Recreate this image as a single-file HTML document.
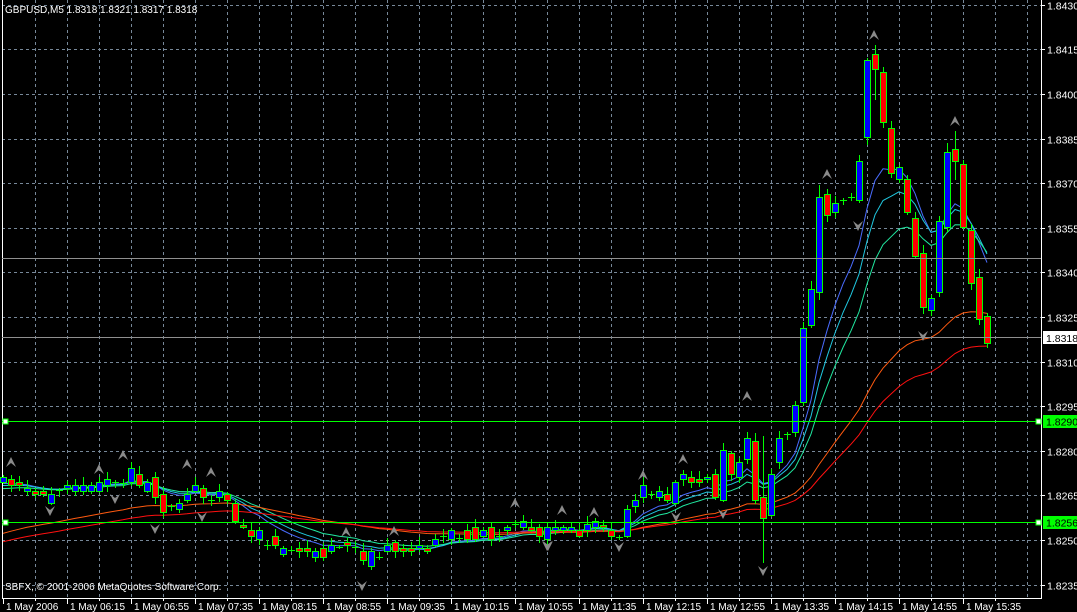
<!DOCTYPE html><html><head><meta charset="utf-8"><style>
html,body{margin:0;padding:0;background:#000;}
svg{display:block;font-family:"Liberation Sans",sans-serif;}
</style></head><body>
<svg id="s" width="1077" height="612" viewBox="0 0 1077 612" xmlns="http://www.w3.org/2000/svg">
<rect width="1077" height="612" fill="#000"/>
<g id="grid"></g>
<g id="ma"></g>
<g id="cs"></g>
<g id="fr"></g>
<g id="ov"></g>
<text x="5" y="13" fill="#fff" font-size="10">GBPUSD,M5  1.8318 1.8321 1.8317 1.8318</text>
<text x="5" y="590" fill="#fff" font-size="10">SBFX, © 2001-2006 MetaQuotes Software Corp.</text>
</svg>
<script>
var NS="http://www.w3.org/2000/svg";
function el(p,t,a,txt){var e=document.createElementNS(NS,t);for(var k in a)e.setAttribute(k,a[k]);if(txt!=null)e.textContent=txt;document.getElementById(p).appendChild(e);return e;}
function py(p){return 317+(1.8325-p)/0.0015*44.6;}
for(var x=35;x<1040;x+=32)el("grid","line",{x1:x+.5,y1:0,x2:x+.5,y2:598,stroke:"#778899","stroke-dasharray":"3,3"});
for(var i=0;i<14;i++){var p=1.8430-i*0.0015,y=Math.round(py(p))+.5;
el("grid","line",{x1:2,y1:y,x2:1041,y2:y,stroke:"#778899","stroke-dasharray":"3,3"});
el("grid","line",{x1:1041,y1:y,x2:1045,y2:y,stroke:"#fff"});
if(Math.abs(y-522)>8&&Math.abs(y-421)>8)el("grid","text",{x:1047,y:y+4,fill:"#fff","font-size":"10.5"},p.toFixed(4));}
el("grid","line",{x1:2.5,y1:0,x2:2.5,y2:599,stroke:"#fff"});
el("grid","line",{x1:1041.5,y1:0,x2:1041.5,y2:599,stroke:"#fff"});
el("grid","line",{x1:2,y1:598.5,x2:1042,y2:598.5,stroke:"#fff"});
var tl=["1 May 2006","1 May 06:15","1 May 06:55","1 May 07:35","1 May 08:15","1 May 08:55","1 May 09:35","1 May 10:15","1 May 10:55","1 May 11:35","1 May 12:15","1 May 12:55","1 May 13:35","1 May 14:15","1 May 14:55","1 May 15:35"];
for(var k=0;k<tl.length;k++){var tx=3+64*k;el("grid","line",{x1:tx+.5,y1:598,x2:tx+.5,y2:604,stroke:"#fff"});el("grid","text",{x:tx+3,y:610,fill:"#fff","font-size":"10"},tl[k]);}
for(var x=35;x<1040;x+=64)el("grid","line",{x1:x+.5,y1:598,x2:x+.5,y2:601,stroke:"#fff"});
var C=[[3,477,482,'b'],[11,479,485,'r'],[19,482,485,'r'],[27,488,491,'b'],[35,491,494,'r'],[43,491,494,'r'],[51,494,503,'b'],[59,490,490,'d'],[67,485,488,'b'],[75,485,491,'b'],[83,485,491,'b'],[91,485,491,'b'],[99,482,491,'b'],[107,479,485,'b'],[115,482,482,'d'],[123,483,483,'d'],[131,468,482,'b'],[139,474,485,'r'],[147,482,491,'b'],[155,477,497,'r'],[163,494,512,'r'],[171,506,506,'d'],[179,503,509,'b'],[187,494,500,'b'],[195,485,491,'b'],[203,488,497,'r'],[211,500,500,'d'],[219,491,497,'b'],[227,494,500,'r'],[235,503,521,'r'],[243,525,527,'r'],[251,530,536,'r'],[259,530,539,'b'],[267,545,545,'d'],[275,536,545,'r'],[283,548,554,'b'],[291,550,550,'d'],[299,548,551,'r'],[307,548,551,'r'],[315,551,557,'b'],[323,548,557,'r'],[331,545,551,'b'],[339,547,547,'d'],[347,542,545,'r'],[355,547,547,'d'],[363,551,560,'r'],[371,551,566,'b'],[379,557,557,'d'],[387,545,551,'b'],[395,542,551,'r'],[403,548,551,'r'],[411,548,551,'r'],[419,545,548,'b'],[427,548,551,'r'],[435,539,545,'b'],[443,536,536,'d'],[451,530,539,'b'],[459,538,538,'d'],[467,530,539,'r'],[475,527,539,'r'],[483,530,536,'b'],[491,527,539,'r'],[499,536,536,'d'],[507,527,530,'b'],[515,524,524,'d'],[523,521,527,'b'],[531,527,530,'r'],[539,527,536,'r'],[547,527,539,'b'],[555,527,530,'b'],[563,527,530,'b'],[571,527,530,'b'],[579,530,536,'r'],[587,524,530,'b'],[595,521,527,'b'],[603,525,527,'r'],[611,530,536,'r'],[619,537,537,'d'],[627,509,536,'b'],[635,500,506,'b'],[643,485,497,'b'],[651,494,494,'d'],[659,491,497,'b'],[667,494,500,'r'],[675,482,503,'b'],[683,474,479,'b'],[691,477,482,'r'],[699,479,482,'r'],[707,477,479,'b'],[715,474,497,'r'],[723,450,500,'b'],[731,453,474,'r'],[739,462,477,'b'],[747,438,459,'b'],[755,441,500,'r'],[763,497,518,'r'],[771,474,515,'b'],[779,438,462,'b'],[787,434,434,'d'],[795,405,432,'b'],[803,328,402,'b'],[811,289,325,'b'],[819,197,292,'b'],[827,194,215,'r'],[835,203,212,'b'],[843,200,200,'d'],[851,197,197,'d'],[859,161,200,'b'],[867,60,137,'b'],[875,54,69,'r'],[883,72,122,'r'],[891,128,173,'r'],[899,167,179,'b'],[907,179,212,'r'],[915,218,256,'r'],[923,253,307,'r'],[931,298,310,'b'],[939,221,292,'b'],[947,152,227,'b'],[955,149,161,'r'],[963,164,227,'r'],[971,230,283,'r'],[979,277,319,'r'],[987,316,343,'r']];
var W={763:[436,563],875:[45,100],867:[58,145],819:[185,300],955:[131,180],947:[143,232]};
var cl=C.map(function(c){return c[3]=='b'?c[1]:c[3]=='r'?c[2]:c[1];});
function ema(n,init){var a=2/(n+1),v=init,o=[];for(var i=0;i<cl.length;i++){v=v+a*(cl[i]-v);o.push(v);}return o;}
var mas=[[ema(9,485),"#4a6cff"],[ema(12,487),"#20c8e0"],[ema(17,490),"#20e8a0"],[ema(44,536),"#ff5a10"],[ema(60,544),"#ff1010"]];
mas.forEach(function(m){var d="";for(var i=0;i<C.length;i++)d+=(i?"L":"M")+C[i][0]+" "+m[0][i].toFixed(1);el("ma","path",{d:d,fill:"none",stroke:m[1],"stroke-width":"1"});});
for(var i=0;i<C.length;i++){var c=C[i],x=c[0],t=c[1],b=c[2];
var h=(i*37)%7+2,l=(i*53)%6+2;var wt=t-h,wb=b+l;if(W[x]){wt=W[x][0];wb=W[x][1];}
el("cs","line",{x1:x+.5,y1:wt,x2:x+.5,y2:wb,stroke:"#00ff00"});
if(c[3]=='d'){el("cs","line",{x1:x-3,y1:t+.5,x2:x+4,y2:t+.5,stroke:"#00ff00"});}
else el("cs","rect",{x:x-2.5,y:t+.5,width:6,height:Math.max(2,b-t),fill:c[3]=='b'?"#0000ff":"#ff0000",stroke:"#00ff00"});}
function up(x,y){el("fr","path",{d:"M"+(x-5)+" "+(y+5)+"L"+x+" "+(y-5)+"L"+(x+5)+" "+(y+5)+"L"+x+" "+(y+1)+"Z",fill:"#8a8a8a"});}
function dn(x,y){el("fr","path",{d:"M"+(x-5)+" "+(y-5)+"L"+x+" "+(y+5)+"L"+(x+5)+" "+(y-5)+"L"+x+" "+(y-1)+"Z",fill:"#8a8a8a"});}
[[11,462],[99,469],[123,455],[187,464],[211,472],[346,532],[394,531],[515,503],[562,510],[594,512],[643,475],[683,459],[747,396],[827,174],[874,35],[955,121]].forEach(function(a){up(a[0],a[1]);});
[[50,511],[115,499],[155,529],[202,517],[362,586],[548,546],[619,547],[676,517],[723,514],[763,571],[858,226],[923,336],[547,546]].forEach(function(a){dn(a[0],a[1]);});
el("ov","line",{x1:2,y1:258.5,x2:1041,y2:258.5,stroke:"#8f8f8f"});
el("ov","line",{x1:2,y1:337.5,x2:1041,y2:337.5,stroke:"#8f8f8f"});
[[421,"1.8290"],[522,"1.8256"]].forEach(function(g){var y=g[0]+.5;
el("ov","line",{x1:2,y1:y,x2:1041,y2:y,stroke:"#00ff00"});
el("ov","rect",{x:3,y:y-2.5,width:5,height:5,fill:"#fff",stroke:"#00ff00"});
el("ov","rect",{x:1036,y:y-2.5,width:5,height:5,fill:"#fff",stroke:"#00ff00"});
el("ov","rect",{x:1043,y:y-6.5,width:34,height:13,fill:"#00ff00"});
el("ov","text",{x:1046,y:y+4,fill:"#000","font-size":"10.5"},g[1]);});
el("ov","rect",{x:1043,y:331,width:34,height:13,fill:"#fff"});
el("ov","text",{x:1046,y:342,fill:"#000","font-size":"10.5"},"1.8318");
</script>
</body></html>
